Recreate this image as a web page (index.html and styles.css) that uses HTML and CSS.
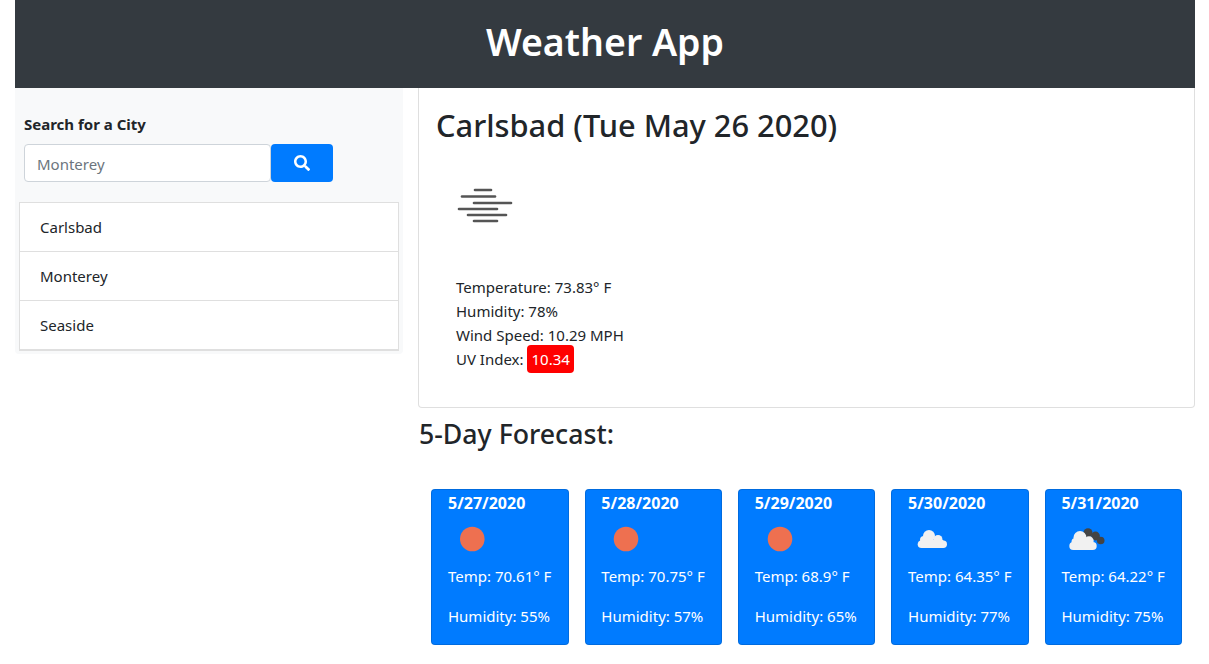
FILE: index.html
```html
<!DOCTYPE html>
<html lang="en">
<head>
    <meta charset="UTF-8">
    <meta name="viewport" content="width=device-width, initial-scale=1.0">
    <title>Weather App</title>
    <link rel="stylesheet" href="styles.css">
</head>
<body>
    <header class="header">
        <h1>Weather App</h1>
    </header>
    <div class="content">
        <aside class="sidebar">
            <form class="search">
                <label for="city">Search for a City</label>
                <div class="input-group">
                    <input type="text" id="city" placeholder="Monterey">
                    <button type="button" aria-label="Search">
                        <svg viewBox="0 0 512 512" width="16" height="16"><path fill="#fff" d="M505 442.7L405.3 343c-4.5-4.5-10.6-7-17-7H372c27.6-35.3 44-79.7 44-128C416 93.1 322.9 0 208 0S0 93.1 0 208s93.1 208 208 208c48.3 0 92.7-16.4 128-44v16.3c0 6.4 2.5 12.5 7 17l99.7 99.7c9.4 9.4 24.6 9.4 33.9 0l28.3-28.3c9.4-9.4 9.4-24.6.1-34zM208 336c-70.7 0-128-57.2-128-128 0-70.7 57.2-128 128-128 70.7 0 128 57.2 128 128 0 70.7-57.2 128-128 128z"/></svg>
                    </button>
                </div>
            </form>
            <ul class="city-list">
                <li>Carlsbad</li>
                <li>Monterey</li>
                <li>Seaside</li>
            </ul>
        </aside>
        <main class="main">
            <section class="current">
                <h2>Carlsbad (Tue May 26 2020)</h2>
                <svg class="current-icon" viewBox="0 0 100 100" width="100" height="100">
                    <g stroke="#555" stroke-width="2.6" stroke-linecap="round">
                        <line x1="39" y1="35" x2="55" y2="35"/>
                        <line x1="26" y1="41.5" x2="59" y2="41.5"/>
                        <line x1="38" y1="48" x2="75" y2="48"/>
                        <line x1="23" y1="54" x2="61" y2="54"/>
                        <line x1="32" y1="60" x2="70" y2="60"/>
                        <line x1="38" y1="66" x2="61" y2="66"/>
                    </g>
                </svg>
                <div class="stats">
                    <div>Temperature: 73.83° F</div>
                    <div>Humidity: 78%</div>
                    <div>Wind Speed: 10.29 MPH</div>
                    <div>UV Index: <span class="uv">10.34</span></div>
                </div>
            </section>
            <h3>5-Day Forecast:</h3>
            <div class="forecast">
                <div class="day">
                    <div class="date">5/27/2020</div>
                    <svg class="day-icon" viewBox="0 0 50 50"><circle cx="24.3" cy="25" r="12.3" fill="#ee7050"/></svg>
                    <p>Temp: 70.61° F</p>
                    <p>Humidity: 55%</p>
                </div>
                <div class="day">
                    <div class="date">5/28/2020</div>
                    <svg class="day-icon" viewBox="0 0 50 50"><circle cx="25" cy="25" r="12.3" fill="#ee7050"/></svg>
                    <p>Temp: 70.75° F</p>
                    <p>Humidity: 57%</p>
                </div>
                <div class="day">
                    <div class="date">5/29/2020</div>
                    <svg class="day-icon" viewBox="0 0 50 50"><circle cx="25" cy="25" r="12.3" fill="#ee7050"/></svg>
                    <p>Temp: 68.9° F</p>
                    <p>Humidity: 65%</p>
                </div>
                <div class="day">
                    <div class="date">5/30/2020</div>
                    <svg class="day-icon" viewBox="0 0 50 50">
                        <g fill="#f1f1f1">
                            <circle cx="21" cy="22" r="6"/>
                            <circle cx="30" cy="25.5" r="4.5"/>
                            <circle cx="35.3" cy="30.3" r="3.7"/>
                            <circle cx="16" cy="26" r="4"/>
                            <circle cx="13.5" cy="30.2" r="3.8"/>
                            <rect x="13.5" y="26" width="21.8" height="8"/>
                        </g>
                    </svg>
                    <p>Temp: 64.35° F</p>
                    <p>Humidity: 77%</p>
                </div>
                <div class="day">
                    <div class="date">5/31/2020</div>
                    <svg class="day-icon" viewBox="0 0 50 50">
                        <g fill="#444">
                            <circle cx="27" cy="18.8" r="4.5"/>
                            <circle cx="34.5" cy="22" r="4.4"/>
                            <circle cx="39.7" cy="26.5" r="3.8"/>
                        </g>
                        <g fill="#f1f1f1">
                            <circle cx="19" cy="23.5" r="6.5"/>
                            <circle cx="28" cy="27" r="4.7"/>
                            <circle cx="31.7" cy="32" r="4"/>
                            <circle cx="14.5" cy="28" r="4"/>
                            <circle cx="12.3" cy="32" r="4"/>
                            <rect x="12.3" y="27" width="19.4" height="9"/>
                        </g>
                    </svg>
                    <p>Temp: 64.22° F</p>
                    <p>Humidity: 75%</p>
                </div>
            </div>
        </main>
    </div>
</body>
</html>
```

FILE: styles.css
```css
* {
    box-sizing: border-box;
}

body {
    margin: 0;
    padding: 0 14px 0 15px;
    font-family: "Noto Sans", "Open Sans", sans-serif;
    font-size: 15px;
    line-height: 24px;
    color: #212529;
    background-color: #fff;
}

.header {
    height: 88px;
    padding-bottom: 5px;
    background-color: #343a40;
    color: #fff;
    display: flex;
    align-items: center;
    justify-content: center;
}

.header h1 {
    margin: 0;
    font-size: 37.5px;
    font-weight: 600;
    line-height: 1.2;
}

.content {
    display: flex;
    gap: 15px;
    align-items: flex-start;
}

.sidebar {
    width: 388px;
    flex: none;
    padding: 24px 4px 3px;
    background-color: #f8f9fa;
    border-radius: 0 0 4px 4px;
}

.search {
    padding: 0 5px;
    margin-bottom: 20px;
}

.search label {
    display: block;
    font-weight: 700;
    margin-bottom: 8px;
}

.input-group {
    display: flex;
    height: 38px;
}

.input-group input {
    width: 247px;
    padding: 7px 12px 5px;
    font: inherit;
    color: #495057;
    border: 1px solid #ced4da;
    border-radius: 4px;
    background-color: #fff;
    outline: none;
}

.input-group input::placeholder {
    color: #6c757d;
}

.input-group button {
    width: 62px;
    border: none;
    border-radius: 4px;
    background-color: #007bff;
    display: flex;
    align-items: center;
    justify-content: center;
    cursor: pointer;
}

.city-list {
    list-style: none;
    margin: 0;
    padding: 0;
    background-color: #fff;
    border: 1px solid rgba(0, 0, 0, .125);
    border-bottom-width: 2px;
}

.city-list li {
    height: 49px;
    padding: 12px 20px;
    border-bottom: 1px solid rgba(0, 0, 0, .125);
}

.city-list li:last-child {
    border-bottom: none;
    height: 48px;
}

.main {
    flex: 1;
    min-width: 0;
}

.current {
    height: 320px;
    padding: 18px 17px 0;
    border: 1px solid rgba(0, 0, 0, .125);
    border-top: none;
    border-radius: 0 0 4px 4px;
}

.current h2 {
    margin: 0 0 11px;
    font-size: 30.8px;
    font-weight: 500;
    line-height: 38px;
}

.current-icon {
    display: block;
}

.stats {
    margin: 20px 0 0 20px;
}

.uv {
    padding: 4px;
    color: #fff;
    background-color: #f00;
    border-radius: 4px;
}

.main h3 {
    margin: 9px 0 39px 1px;
    font-size: 26.7px;
    font-weight: 500;
    line-height: 33px;
}

.forecast {
    display: grid;
    grid-template-columns: repeat(5, 1fr);
    gap: 16px;
    padding: 0 12.9px 0 13.3px;
}

.day {
    height: 156px;
    padding: 0 15.7px;
    color: #fff;
    background-color: #007bff;
    border: 1px solid rgba(0, 0, 0, .125);
    border-radius: 4px;
}

.date {
    height: 24px;
    padding-top: 1px;
    font-size: 16px;
    font-weight: 700;
}

.day-icon {
    display: block;
    width: 50px;
    height: 50px;
}

.day p {
    margin: 0 0 16px;
    white-space: nowrap;
}
```
